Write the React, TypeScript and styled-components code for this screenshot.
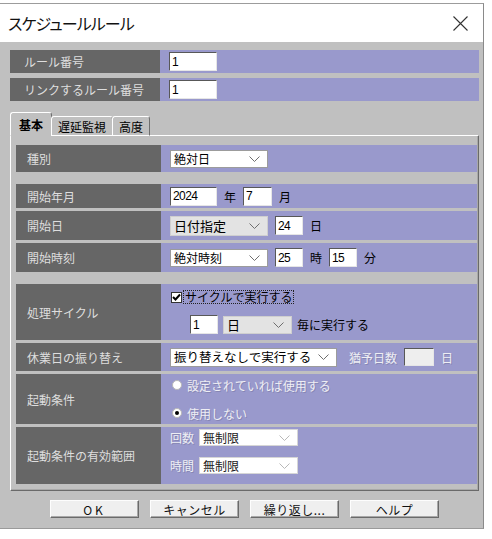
import * as React from 'react';
import styled, { createGlobalStyle } from 'styled-components';

const GlobalStyle = createGlobalStyle`
html, body {
    margin: 0;
    padding: 0;
    background: #fff;
}
body {
    font-family: "Noto Sans CJK JP", "Noto Sans", sans-serif;
    font-size: 12px;
    color: #000;
}
`

const Chevron = (props: { color?: string }) =>
    <svg width="11" height="6" viewBox="0 0 11 6">
        <path d="M0.5 0.5 L5.5 5.5 L10.5 0.5" fill="none" stroke={props.color || '#6e6e6e'} strokeWidth="1" />
    </svg>;

const CloseIcon = () =>
    <svg width="15" height="15" viewBox="0 0 15 15">
        <path d="M0.5 0.5 L14.5 14.5 M14.5 0.5 L0.5 14.5" stroke="#333" strokeWidth="1.1" fill="none" />
    </svg>;

const CheckMark = () =>
    <svg width="9" height="9" viewBox="0 0 9 9">
        <path d="M1 4 L3.5 6.5 L8 1.5" fill="none" stroke="#000" strokeWidth="2" />
    </svg>;

interface DropProps {
    text: string;
    w: number;
    h?: number;
    gray?: boolean;
    dim?: boolean;
    fs?: number;
}

const Select = (props: DropProps) =>
    <StyledSelect $w={props.w} $h={props.h || 18} $gray={props.gray} $dim={props.dim} $fs={props.fs || 12}>
        <span>{props.text}</span>
        <Chevron color={props.dim ? '#b8b8b8' : '#6e6e6e'} />
    </StyledSelect>;

const App = () => {
    return <>
        <GlobalStyle />
        <StyledWindow>
            <StyledTitleBar>
                <StyledTitle>スケジュールルール</StyledTitle>
                <StyledClose><CloseIcon /></StyledClose>
            </StyledTitleBar>
            <StyledBody>
                <StyledTopRows>
                    <StyledRow $h={23}>
                        <StyledLabel $w={150} $pad={14}>ルール番号</StyledLabel>
                        <StyledField><StyledInput $w={48} defaultValue="1" readOnly /></StyledField>
                    </StyledRow>
                    <StyledRow $h={23}>
                        <StyledLabel $w={150} $pad={14}>リンクするルール番号</StyledLabel>
                        <StyledField><StyledInput $w={48} defaultValue="1" readOnly /></StyledField>
                    </StyledRow>
                </StyledTopRows>

                <StyledTabs>
                    <StyledTab $active $w={42}>基本</StyledTab>
                    <StyledTab $w={62}>遅延監視</StyledTab>
                    <StyledTab $w={38}>高度</StyledTab>
                </StyledTabs>
                <StyledPanel>
                    <StyledRow $h={27}>
                        <StyledLabel $w={145} $pad={11}>種別</StyledLabel>
                        <StyledField><Select text="絶対日" w={98} /></StyledField>
                    </StyledRow>

                    <StyledRow $h={24} $mt={12}>
                        <StyledLabel $w={145} $pad={11}>開始年月</StyledLabel>
                        <StyledField>
                            <StyledInput $w={47} defaultValue="2024" readOnly />
                            <StyledUnit>年</StyledUnit>
                            <StyledInput $w={29} defaultValue="7" readOnly />
                            <StyledUnit>月</StyledUnit>
                        </StyledField>
                    </StyledRow>
                    <StyledRow $h={29} $mt={3}>
                        <StyledLabel $w={145} $pad={11}>開始日</StyledLabel>
                        <StyledField>
                            <Select text="日付指定" w={98} h={20} gray fs={13} />
                            <StyledInput $w={28} defaultValue="24" readOnly />
                            <StyledUnit>日</StyledUnit>
                        </StyledField>
                    </StyledRow>
                    <StyledRow $h={29} $mt={3}>
                        <StyledLabel $w={145} $pad={11}>開始時刻</StyledLabel>
                        <StyledField>
                            <Select text="絶対時刻" w={98} />
                            <StyledInput $w={28} defaultValue="25" readOnly />
                            <StyledUnit>時</StyledUnit>
                            <StyledInput $w={28} defaultValue="15" readOnly />
                            <StyledUnit>分</StyledUnit>
                        </StyledField>
                    </StyledRow>

                    <StyledRow $h={56} $mt={12}>
                        <StyledLabel $w={145} $pad={11}>処理サイクル</StyledLabel>
                        <StyledStack $gap={11}>
                            <StyledLine>
                                <StyledCheck><CheckMark /></StyledCheck>
                                <StyledFocus>サイクルで実行する</StyledFocus>
                            </StyledLine>
                            <StyledLine $indent={20}>
                                <StyledInput $w={28} defaultValue="1" readOnly />
                                <Select text="日" w={69} gray fs={13} />
                                <span>毎に実行する</span>
                            </StyledLine>
                        </StyledStack>
                    </StyledRow>
                    <StyledRow $h={28} $mt={3}>
                        <StyledLabel $w={145} $pad={11}>休業日の振り替え</StyledLabel>
                        <StyledField>
                            <Select text="振り替えなしで実行する" w={167} h={19} fs={12.5} />
                            <StyledDim style={{ marginLeft: 5 }}>猶予日数</StyledDim>
                            <StyledInput $w={30} $h={18} $disabled readOnly />
                            <StyledDim>日</StyledDim>
                        </StyledField>
                    </StyledRow>
                    <StyledRow $h={50} $mt={3}>
                        <StyledLabel $w={145} $pad={11}>起動条件</StyledLabel>
                        <StyledStack $gap={11}>
                            <StyledLine>
                                <StyledRadio />
                                <StyledDim>設定されていれば使用する</StyledDim>
                            </StyledLine>
                            <StyledLine>
                                <StyledRadio><StyledDot /></StyledRadio>
                                <StyledDim>使用しない</StyledDim>
                            </StyledLine>
                        </StyledStack>
                    </StyledRow>
                    <StyledRow $h={57} $mt={3}>
                        <StyledLabel $w={145} $pad={11}>起動条件の有効範囲</StyledLabel>
                        <StyledStack $gap={11} $top>
                            <StyledLine>
                                <StyledDim>回数</StyledDim>
                                <Select text="無制限" w={99} h={17} dim />
                            </StyledLine>
                            <StyledLine>
                                <StyledDim>時間</StyledDim>
                                <Select text="無制限" w={99} h={17} dim />
                            </StyledLine>
                        </StyledStack>
                    </StyledRow>
                </StyledPanel>

                <StyledButtons>
                    <StyledButton $spaced>OK</StyledButton>
                    <StyledButton>キャンセル</StyledButton>
                    <StyledButton>繰り返し...</StyledButton>
                    <StyledButton>ヘルプ</StyledButton>
                </StyledButtons>
            </StyledBody>
        </StyledWindow>
    </>;
}

const StyledWindow = styled.div`
margin-top: 3px;
width: 484px;
box-sizing: border-box;
border-top: 1px solid #9c9c9c;
border-right: 1px solid #8a8a8a;
border-bottom: 1px solid #9a9a9a;
`

const StyledTitleBar = styled.div`
height: 38px;
background: #fff;
display: flex;
align-items: center;
justify-content: space-between;
padding: 0 15px 0 8px;
`

const StyledTitle = styled.div`
font-size: 16px;
font-feature-settings: "palt";
letter-spacing: -0.9px;
color: #111;
`

const StyledClose = styled.div`
display: flex;
align-items: center;
`

const StyledBody = styled.div`
background: #c0c0c0;
padding: 8px 4px 10px 10px;
`

const StyledTopRows = styled.div`
display: flex;
flex-direction: column;
gap: 5px;
`

const StyledRow = styled.div<{ $h: number; $mt?: number }>`
display: flex;
height: ${p => p.$h}px;
margin-top: ${p => p.$mt || 0}px;
`

const StyledLabel = styled.div<{ $w: number; $pad: number }>`
width: ${p => p.$w}px;
flex-shrink: 0;
box-sizing: border-box;
padding-left: ${p => p.$pad}px;
background: #666;
color: #dedede;
display: flex;
align-items: center;
`

const StyledField = styled.div`
flex: 1;
background: #9999cc;
display: flex;
align-items: center;
gap: 7px;
padding-left: 9px;
`

const StyledStack = styled.div<{ $gap: number; $top?: boolean }>`
flex: 1;
background: #9999cc;
display: flex;
flex-direction: column;
justify-content: ${p => p.$top ? 'flex-start' : 'center'};
gap: ${p => p.$gap}px;
padding: ${p => p.$top ? '2px' : '0'} 0 0 9px;
`

const StyledLine = styled.div<{ $indent?: number }>`
display: flex;
align-items: center;
gap: 5px;
min-height: 14px;
padding-left: ${p => p.$indent || 0}px;
`

const StyledInput = styled.input<{ $w: number; $h?: number; $disabled?: boolean }>`
width: ${p => p.$w}px;
height: ${p => p.$h || 19}px;
box-sizing: border-box;
margin: 0;
padding: 0 0 0 2px;
border: 1px solid;
border-color: #585858 #e6e6e6 #e6e6e6 #585858;
background: ${p => p.$disabled ? '#eeeeee' : '#fff'};
font: 12px "Liberation Sans", sans-serif;
letter-spacing: -0.6px;
color: #000;
outline: none;
`

const StyledSelect = styled.div<{ $w: number; $h: number; $gray?: boolean; $dim?: boolean; $fs: number }>`
width: ${p => p.$w}px;
height: ${p => p.$h}px;
box-sizing: border-box;
flex-shrink: 0;
display: flex;
align-items: center;
justify-content: space-between;
gap: 4px;
padding: 0 7px 0 3px;
background: ${p => p.$gray ? '#e3e3e3' : '#fff'};
border: 1px solid ${p => p.$gray ? '#cfcfcf' : p.$dim ? '#d6d6d6' : '#9c9c9c'};
font-size: ${p => p.$fs}px;
color: ${p => p.$dim ? '#222' : '#000'};
line-height: 1;
white-space: nowrap;
`

const StyledUnit = styled.span`
color: #000;
`

const StyledDim = styled.span`
color: #eeeef4;
text-shadow: 1px 1px 0 rgba(110, 110, 150, 0.45);
`

const StyledCheck = styled.span`
width: 11px;
height: 11px;
box-sizing: border-box;
margin-left: 1px;
border: 1px solid #333;
background: #fff;
display: flex;
align-items: center;
justify-content: center;
`

const StyledFocus = styled.span`
margin-left: -4px;
padding: 0 1px;
border: 1px dotted #222;
line-height: 12px;
color: #000;
`

const StyledRadio = styled.span`
width: 10px;
height: 10px;
box-sizing: border-box;
margin-left: 2px;
border-radius: 50%;
border: 1px solid #b8b8b8;
background: #fff;
display: flex;
align-items: center;
justify-content: center;
`

const StyledDot = styled.span`
width: 4px;
height: 4px;
border-radius: 50%;
background: #000;
`

const StyledTabs = styled.div`
margin-top: 12px;
display: flex;
align-items: flex-end;
height: 23px;
position: relative;
z-index: 1;
margin-bottom: -1px;
`

const StyledTab = styled.div<{ $active?: boolean; $w: number }>`
width: ${p => p.$w}px;
height: ${p => p.$active ? 24 : 20}px;
box-sizing: border-box;
display: flex;
align-items: center;
justify-content: center;
padding-top: ${p => p.$active ? 0 : 1}px;
background: #c0c0c0;
border: 1px solid;
border-color: #fff #6e6e6e ${p => p.$active ? '#c0c0c0' : '#fff'} #fff;
border-radius: 3px 3px 0 0;
margin-left: ${p => p.$active ? 0 : -1}px;
font-weight: ${p => p.$active ? 700 : 400};
font-size: 12px;
color: #000;
`

const StyledPanel = styled.div`
border: 1px solid;
border-color: #fff #6a6a6a #6a6a6a #fff;
box-shadow: inset -1px -1px 0 #a8a8a8;
padding: 9px 1px 6px 5px;
`

const StyledButtons = styled.div`
margin-top: 9px;
display: flex;
justify-content: center;
gap: 11px;
`

const StyledButton = styled.div<{ $spaced?: boolean }>`
width: 89px;
height: 18px;
box-sizing: border-box;
display: flex;
align-items: center;
justify-content: center;
background: #efefef;
border: 1px solid;
border-color: #fdfdfd #6a6a6a #6a6a6a #fdfdfd;
box-shadow: inset -1px -1px 0 #a8a8a8;
font-size: 12px;
letter-spacing: ${p => p.$spaced ? '3px' : '0.5px'};
color: #111;
`

export default App;
